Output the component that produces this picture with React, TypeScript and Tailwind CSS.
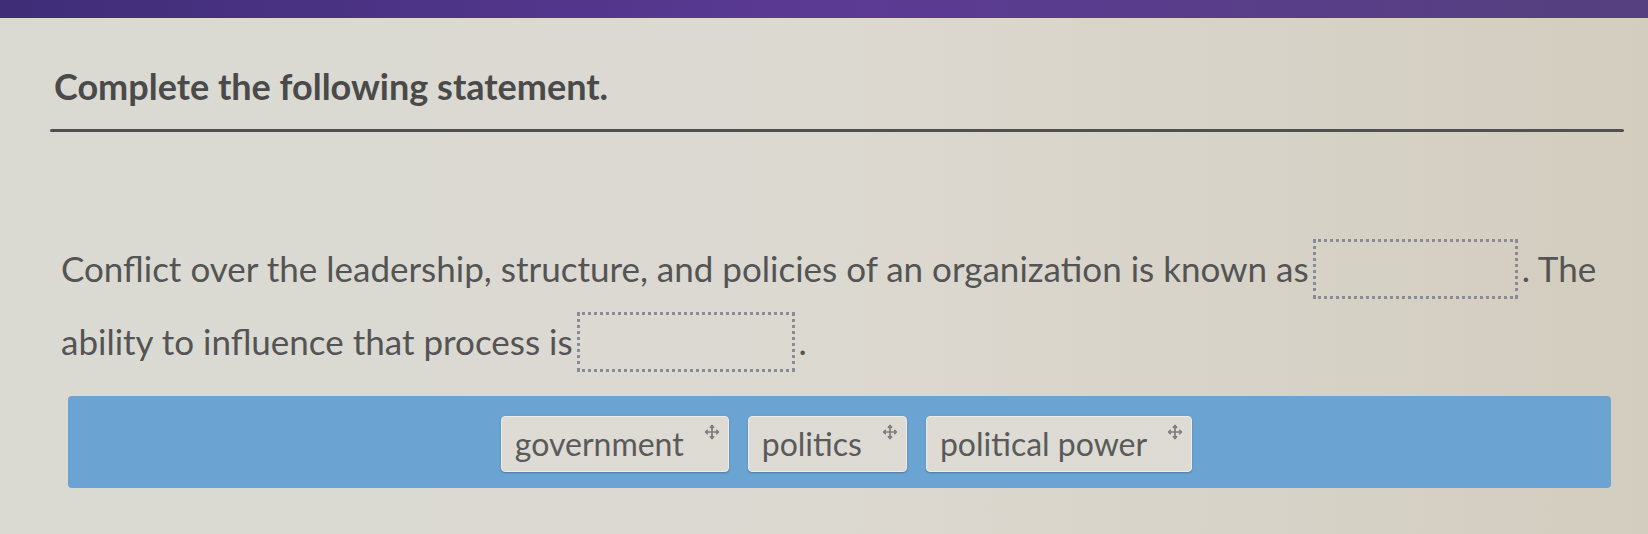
import React from "react";

const Blank = ({ w }: { w: string }) => (
  <span
    className={`inline-block align-middle h-[60px] ${w} border-[3px] border-dotted border-[#8a8c95] mx-[4px]`}
  />
);

// four-way drag handle: a small cross with arrow tips
const DragHandle = () => (
  <svg
    viewBox="0 0 14 14"
    className="absolute top-[7px] right-[8px] w-[16px] h-[16px]"
    fill="none"
    stroke="#7d7d7d"
    strokeWidth="1.5"
    strokeLinecap="round"
    strokeLinejoin="round"
  >
    <path d="M7 1.5v11M1.5 7h11" />
    <path d="M5.6 2.9 7 1.5l1.4 1.4M5.6 11.1 7 12.5l1.4-1.4M2.9 5.6 1.5 7l1.4 1.4M11.1 5.6 12.5 7l-1.4 1.4" />
  </svg>
);

const Chip = ({ label }: { label: string }) => (
  <div className="relative flex items-center h-[56px] pl-[13px] pr-[44px] rounded-[4px] bg-[#dddbd4] border border-[#eeece6] shadow-[0_1px_2px_rgba(0,0,0,0.25)] text-[32px] text-[#5a5a5a]">
    {label}
    <DragHandle />
  </div>
);

export default function App() {
  return (
    <div
      className="w-[1648px] h-[534px] overflow-hidden bg-gradient-to-r from-[#dadad3] via-[#dcd9d1] to-[#d3cdbf] text-[#4e4e4e]"
      style={{ fontFamily: "Lato, 'Noto Sans', sans-serif" }}
    >
      <div className="h-[18px] bg-gradient-to-r from-[#3f2d78] via-[#5b3a94] to-[#56407f]" />

      <div className="pl-[54px] pr-[24px] pt-[50px]">
        <h2 className="text-[36px] font-bold leading-none text-[#4a4a4a]">
          Complete the following statement.
        </h2>
        <div className="mt-[25px] h-[3px] bg-[#4f504f] rounded-full -ml-[4px]" />
      </div>

      <div className="pl-[61px] pt-[100px] text-[35px] leading-[73px] text-[#545454]">
        <div className="h-[73px] flex items-center">
          Conflict over the leadership, structure, and policies of an organization is known as
          <Blank w="w-[205px]" />
          <span>. The</span>
        </div>
        <div className="h-[73px] flex items-center">
          ability to influence that process is
          <Blank w="w-[218px]" />
          <span>.</span>
        </div>
      </div>

      <div className="mt-[18px] ml-[68px] w-[1543px] h-[92px] pl-[14px] pt-[4px] rounded-[4px] bg-[#6ba4d3] flex items-center justify-center gap-[19px]">
        <Chip label="government" />
        <Chip label="politics" />
        <Chip label="political power" />
      </div>
    </div>
  );
}
